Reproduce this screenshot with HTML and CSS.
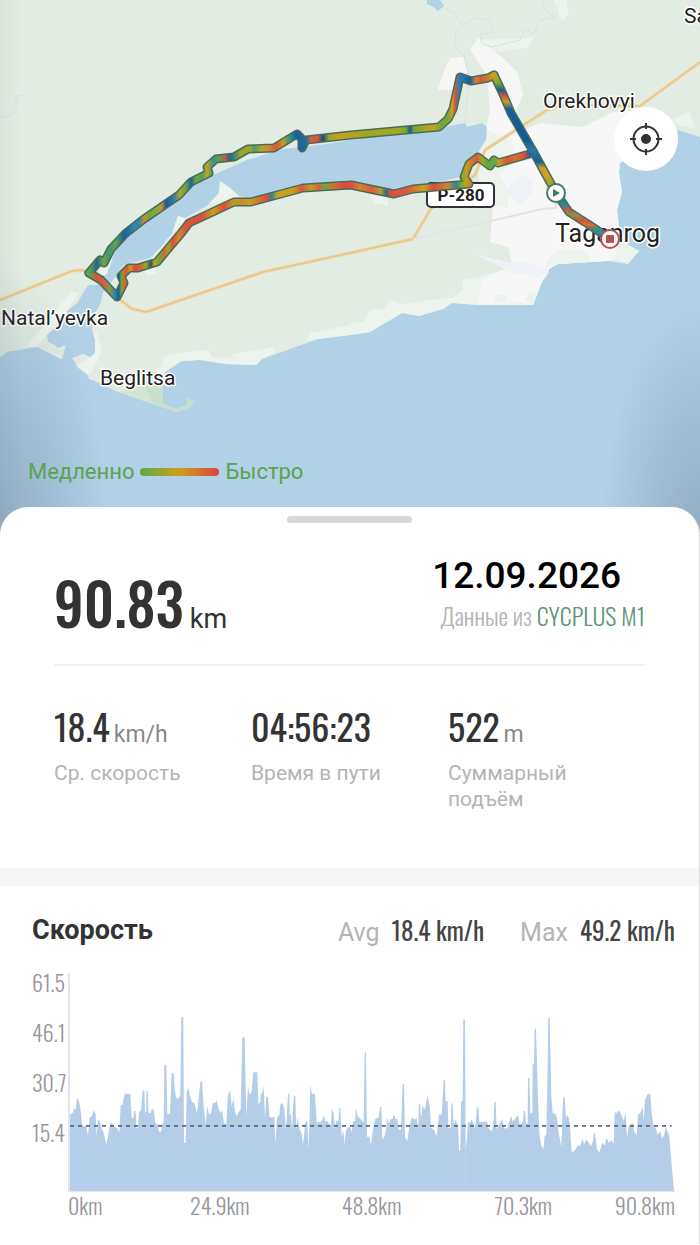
FILE: index.html
```
<!DOCTYPE html>
<html lang="ru">
<head>
  <meta charset="UTF-8">
  <meta name="viewport" content="width=device-width, initial-scale=1.0">
  <title>Поездка 12.09.2026</title>
  <link rel="stylesheet" href="styles.css">
</head>
<body>
  <section class="map">
    <svg class="map-canvas" viewBox="0 0 700 540" role="img" aria-label="Карта маршрута">
      <defs>
        <!-- route colours: offset = coordinate / 1000 -->
        <linearGradient id="speed-north" gradientUnits="userSpaceOnUse" x1="0" y1="0" x2="1000" y2="0">
          <stop offset=".090" stop-color="#5ba648"/><stop offset=".097" stop-color="#1f6595"/>
          <stop offset=".103" stop-color="#6fa63c"/><stop offset=".109" stop-color="#3f9375"/>
          <stop offset=".116" stop-color="#5fa545"/><stop offset=".124" stop-color="#17619a"/>
          <stop offset=".134" stop-color="#2f84b0"/><stop offset=".140" stop-color="#3a8a9a"/>
          <stop offset=".144" stop-color="#d08a2c"/><stop offset=".149" stop-color="#6fa63c"/>
          <stop offset=".158" stop-color="#92a634"/><stop offset=".162" stop-color="#cf8630"/>
          <stop offset=".166" stop-color="#125c98"/><stop offset=".174" stop-color="#2d7fa8"/>
          <stop offset=".180" stop-color="#b3a322"/><stop offset=".186" stop-color="#5fa64a"/>
          <stop offset=".191" stop-color="#1c6396"/><stop offset=".196" stop-color="#6fa63c"/>
          <stop offset=".202" stop-color="#4f9f68"/><stop offset=".207" stop-color="#c3a323"/>
          <stop offset=".213" stop-color="#3f9580"/><stop offset=".220" stop-color="#5f9f50"/>
          <stop offset=".225" stop-color="#d4553f"/><stop offset=".230" stop-color="#1a669c"/>
          <stop offset=".240" stop-color="#8da630"/><stop offset=".250" stop-color="#a3a52c"/>
          <stop offset=".254" stop-color="#4f9a70"/><stop offset=".262" stop-color="#c0a224"/>
          <stop offset=".269" stop-color="#d0872c"/><stop offset=".277" stop-color="#d8563c"/>
          <stop offset=".283" stop-color="#c7a122"/><stop offset=".289" stop-color="#3f9580"/>
          <stop offset=".296" stop-color="#175f9b"/><stop offset=".306" stop-color="#1d6da6"/>
          <stop offset=".311" stop-color="#d6603b"/><stop offset=".318" stop-color="#d8553d"/>
          <stop offset=".323" stop-color="#134f80"/><stop offset=".329" stop-color="#96a630"/>
          <stop offset=".338" stop-color="#c6a11e"/><stop offset=".360" stop-color="#a5a722"/>
          <stop offset=".400" stop-color="#9ca822"/><stop offset=".406" stop-color="#6fa63c"/>
          <stop offset=".410" stop-color="#15598f"/><stop offset=".414" stop-color="#6fa63c"/>
          <stop offset=".424" stop-color="#a5a722"/><stop offset=".434" stop-color="#c0a31f"/>
          <stop offset=".441" stop-color="#6fa63c"/><stop offset=".449" stop-color="#7fa634"/>
          <stop offset=".452" stop-color="#d0a022"/><stop offset=".455" stop-color="#d8563c"/>
          <stop offset=".459" stop-color="#2f80b0"/><stop offset=".470" stop-color="#12619f"/>
          <stop offset=".476" stop-color="#d07d3a"/><stop offset=".481" stop-color="#d8553d"/>
          <stop offset=".487" stop-color="#cf7a2c"/><stop offset=".494" stop-color="#c6a11e"/>
        </linearGradient>
        <linearGradient id="speed-south" gradientUnits="userSpaceOnUse" x1="0" y1="0" x2="1000" y2="0">
          <stop offset=".090" stop-color="#5ba648"/><stop offset=".096" stop-color="#d05a3c"/>
          <stop offset=".104" stop-color="#d6603b"/><stop offset=".110" stop-color="#7f9a50"/>
          <stop offset=".115" stop-color="#2f80b0"/><stop offset=".119" stop-color="#125c98"/>
          <stop offset=".121" stop-color="#5fa545"/><stop offset=".124" stop-color="#d0702c"/>
          <stop offset=".127" stop-color="#d8553d"/><stop offset=".130" stop-color="#c6a11e"/>
          <stop offset=".135" stop-color="#dc4a3c"/><stop offset=".140" stop-color="#d6603b"/>
          <stop offset=".146" stop-color="#9ca822"/><stop offset=".151" stop-color="#17557f"/>
          <stop offset=".154" stop-color="#c6a11e"/><stop offset=".160" stop-color="#6fa63c"/>
          <stop offset=".165" stop-color="#d8653d"/><stop offset=".168" stop-color="#a5a722"/>
          <stop offset=".173" stop-color="#dc4f3c"/><stop offset=".179" stop-color="#cf8a2c"/>
          <stop offset=".186" stop-color="#dc4f3c"/><stop offset=".203" stop-color="#d8553d"/>
          <stop offset=".213" stop-color="#c6a11e"/><stop offset=".224" stop-color="#dc4f3c"/>
          <stop offset=".234" stop-color="#b3a322"/><stop offset=".242" stop-color="#d0852c"/>
          <stop offset=".249" stop-color="#c6a11e"/><stop offset=".267" stop-color="#dc4f3c"/>
          <stop offset=".272" stop-color="#2f80a0"/><stop offset=".277" stop-color="#c0a31f"/>
          <stop offset=".292" stop-color="#c6a11e"/><stop offset=".302" stop-color="#dc553c"/>
          <stop offset=".311" stop-color="#b8a322"/><stop offset=".319" stop-color="#d6603b"/>
          <stop offset=".324" stop-color="#6fa63c"/><stop offset=".333" stop-color="#d0752c"/>
          <stop offset=".343" stop-color="#dc4a3c"/><stop offset=".352" stop-color="#d8553d"/>
          <stop offset=".360" stop-color="#d0852c"/><stop offset=".372" stop-color="#dc5a3c"/>
          <stop offset=".381" stop-color="#b0a030"/><stop offset=".386" stop-color="#1f6f9b"/>
          <stop offset=".390" stop-color="#dc4f3c"/><stop offset=".408" stop-color="#d8603d"/>
          <stop offset=".424" stop-color="#c6a11e"/><stop offset=".433" stop-color="#dc4f3c"/>
          <stop offset=".448" stop-color="#d0852c"/><stop offset=".456" stop-color="#2f859a"/>
          <stop offset=".462" stop-color="#7fa634"/><stop offset=".466" stop-color="#c0a31f"/>
          <stop offset=".472" stop-color="#d0752c"/><stop offset=".477" stop-color="#dc553c"/>
          <stop offset=".482" stop-color="#9ca822"/><stop offset=".488" stop-color="#5fa64a"/>
          <stop offset=".494" stop-color="#5fa64a"/><stop offset=".499" stop-color="#c0a31f"/>
          <stop offset=".507" stop-color="#dc553c"/><stop offset=".516" stop-color="#d0702c"/>
          <stop offset=".524" stop-color="#dc4f3c"/><stop offset=".530" stop-color="#1f6595"/>
        </linearGradient>
        <linearGradient id="speed-city" gradientUnits="userSpaceOnUse" x1="0" y1="0" x2="0" y2="1000">
          <stop offset=".076" stop-color="#c6a11e"/><stop offset=".083" stop-color="#7fa634"/>
          <stop offset=".090" stop-color="#16629c"/><stop offset=".096" stop-color="#d8553d"/>
          <stop offset=".102" stop-color="#c6a11e"/><stop offset=".109" stop-color="#155f9b"/>
          <stop offset=".140" stop-color="#0f5c98"/><stop offset=".150" stop-color="#2a7aa8"/>
          <stop offset=".162" stop-color="#155f9b"/><stop offset=".168" stop-color="#c6a11e"/>
          <stop offset=".177" stop-color="#d0a21f"/><stop offset=".187" stop-color="#7fa634"/>
          <stop offset=".198" stop-color="#1f6f9b"/><stop offset=".205" stop-color="#2f8a9a"/>
          <stop offset=".211" stop-color="#d8553d"/><stop offset=".215" stop-color="#7f9a50"/>
          <stop offset=".220" stop-color="#dc4f3c"/><stop offset=".225" stop-color="#d0702c"/>
          <stop offset=".230" stop-color="#2f8a9a"/>
        </linearGradient>
      </defs>

      <rect class="water" width="700" height="540"/>
      <path class="land" d="M0 0H700V137L678 130L640 150L620 163L619 173L622 192L617 210L619 227L628 245L639 251L635 255L628 264L608 261L558 264L549 269V273L542 282L533 305L520 302H497L494 301L488 304L478 305L452 303L443 309L419 316L402 313L370 332L350 335L318 339L262 359L256 365L225 364L224 362L200 360L182 361L172 365L165 372L163 380L163 403L170 407L177 409L187 405L188 398L194 402L190 407L177 412L118 392L97 382L78 367L72 358L61 359L37 347L7 352L0 357Z"/>

      <path class="shore" d="M350 323L363 322L372 309H383L390 300L402 304L453 297L463 290L462 280L497 272L520 262L533 305L478 305L452 303L443 309L419 316L402 313L370 332L350 335L318 339L306 341L310 333L350 325Z"/>
      <path class="shore" d="M163 357L180 353L208 350L212 357L233 358L232 354L260 350L272 347L276 352L262 359L256 365L225 364L200 360L182 361L165 372L150 372L163 366Z"/>
      <path class="shore" d="M25 347L52 318L60 305L72 291L79 293L66 312L47 335L37 347ZM92 332L97 333L102 350L97 362L88 378L118 392L97 382L76 366L94 355ZM50 352L61 356V359Z"/>
      <path class="shore" d="M150 259L157 273L148 275L140 268ZM478 40L533 38L530 47L500 52ZM553 0H566L569 13L562 23L557 8ZM672 120L690 112L695 128L680 126ZM369 196H388V206L375 203Z"/>
      <path class="spit-light" d="M118 392L135 384H150L152 403Z"/>
      <path class="spit" d="M145 385L163 385V403L177 409L187 405L188 398L194 402L190 407L177 412L152 403Z"/>

      <path class="town" d="M470 50L478 38L490 47L505 60L517 72L523 95L515 112L517 133L540 123L583 127L613 112L640 110L678 130L640 150L620 163L619 173L622 192L617 210L619 227L628 245L630 255L608 261L558 264L549 269L542 282L533 305L520 302L478 305L482 280L512 265L508 247L490 242L493 203L497 180L512 150L500 140L486 130L490 110L487 75Z"/>
      <path class="town" d="M450 58L463 57L467 70L465 80L458 90H438L443 73Z"/>
      <path class="shore" d="M545 268L548 259L558 249L587 251L590 262L558 264ZM614 258L620 240L639 251L628 264ZM486 130L512 140L514 160L500 175L508 190V208L493 205L480 200L478 165ZM493 300L495 295H507L506 302H497ZM525 300L530 293L537 292L533 305Z"/>
      <path class="park" d="M505 190L520 175L533 180L531 196L520 205ZM475 254L510 263H532L549 271L540 277L513 273Z"/>

      <path class="water" d="M97 285L104 275L110 267L115 250L125 238L167 207L187 187L213 175L247 160L283 149L327 144L350 140L440 128L465 123L467 127L482 123L487 127L486 140L473 160L460 177L427 185L393 192L350 182L300 184L250 198L239 196L230 188L220 181L219 193L208 205L185 218L178 216L172 233L160 248L150 258L123 265L113 280L103 292L101 302L92 320V330L95 340V353L90 357L83 354L72 358L61 366L64 352L66 345L58 348L55 345L48 342L47 335L67 318V311L77 303L88 285Z"/>
      <path class="shore" d="M219 193L220 181L230 188L239 196L208 205ZM172 233L178 216L185 218L182 224ZM101 269L107 268L108 272L106 275L98 275Z"/>
      <path class="water" d="M427 0H440L444 6L438 11L432 6L427 4Z"/>
      <path class="stream" d="M444 8L455 14L463 26L456 33L455 45L465 58L469 75L465 123M463 26L475 18L490 20L493 32L480 35L482 44L492 47L520 40L525 28L533 35L540 20L555 17L543 8V0M24 95L15 97L18 106L14 114L5 117L0 116"/>

      <path class="road-halo" d="M0 300L72 271L82 270L90 274M118 298L132 309L146 312L263 272L350 253L413 239L430 210L475 175L485 150L547 110L563 105L640 106L700 62"/>
      <path class="road" d="M0 300L72 271L82 270L90 274M118 298L132 309L146 312L263 272L350 253L413 239L430 210L475 175L485 150L547 110L563 105L640 106L700 62"/>
      <path class="road-minor" d="M413 239L542 209L556 208V193"/>

      <rect class="shield" x="427" y="183" width="67" height="24" rx="4"/>
      <text class="shield-text" x="461" y="201">P-280</text>
      <g class="places">
        <text x="543" y="108">Orekhovyi</text>
        <text x="684" y="23">Sa</text>
        <text x="1" y="325">Natal’yevka</text>
        <text x="100" y="385">Beglitsa</text>
        <text class="city" x="555" y="242">Taganrog</text>
      </g>

      <g class="route-edge">
        <path d="M533 153L498 163L494 160L490 166L478 157L469 164L464 177L469 184L413 189L394 194L351 185L303 188L251 202L234 202L189 223L183 231L157 262L138 268H129L121 276L124 283L117 297L101 280L89 273"/>
        <path d="M494 75L488 78L471 81L460 77L453 109L448 119L439 127L351 135L306 140L302 148V139L297 134L274 148L248 149L234 157L216 159L207 167L209 173L191 182L179 195L144 219L126 233L111 249L104 263L100 260L89 273"/>
        <path d="M494 75L503 94L511 113L533 151L556 193L569 212L591 226L610 239"/>
      </g>
      <g class="route">
        <path stroke="url(#speed-south)" d="M533 153L498 163L494 160L490 166L478 157L469 164L464 177L469 184L413 189L394 194L351 185L303 188L251 202L234 202L189 223L183 231L157 262L138 268H129L121 276L124 283L117 297L101 280L89 273"/>
        <path stroke="url(#speed-north)" d="M494 75L488 78L471 81L460 77L453 109L448 119L439 127L351 135L306 140L302 148V139L297 134L274 148L248 149L234 157L216 159L207 167L209 173L191 182L179 195L144 219L126 233L111 249L104 263L100 260L89 273"/>
        <path stroke="url(#speed-city)" d="M494 75L503 94L511 113L533 151L556 193L569 212L591 226L610 239"/>
      </g>

      <circle class="pin start" cx="556" cy="193" r="9"/>
      <path class="start-icon" d="M553 189V197L560 193Z"/>
      <circle class="pin finish" cx="610" cy="239" r="9"/>
      <rect class="finish-icon" x="606" y="235" width="8" height="8" rx="1"/>
    </svg>

    <button class="locate" type="button" aria-label="Моё местоположение">
      <svg viewBox="0 0 34 34">
        <circle cx="17" cy="17" r="12.5"/>
        <path d="M17 1V7M17 27V33M1 17H7M27 17H33"/>
        <circle class="dot" cx="17" cy="17" r="4"/>
      </svg>
    </button>

    <div class="legend">
      <span>Медленно</span>
      <span class="legend-bar"></span>
      <span>Быстро</span>
    </div>
  </section>

  <main class="sheet">
    <div class="handle"></div>

    <section class="summary">
      <div class="headline">
        <p class="distance">90.83<small>km</small></p>
        <div class="source">
          <p class="date">12.09.2026</p>
          <p class="device">Данные из <b>CYCPLUS M1</b></p>
        </div>
      </div>
      <dl class="stats">
        <div>
          <dd>18.4<small>km/h</small></dd>
          <dt>Ср. скорость</dt>
        </div>
        <div>
          <dd>04:56:23</dd>
          <dt>Время в пути</dt>
        </div>
        <div>
          <dd>522<small>m</small></dd>
          <dt>Суммарный подъём</dt>
        </div>
      </dl>
    </section>

    <section class="speed">
      <header class="speed-head">
        <h2>Скорость</h2>
        <p>Avg <b>18.4 km/h</b></p>
        <p>Max <b>49.2 km/h</b></p>
      </header>
      <div class="chart">
        <div class="y-axis">
          <span>61.5</span>
          <span>46.1</span>
          <span>30.7</span>
          <span>15.4</span>
        </div>
        <svg class="plot" viewBox="0 0 1815 656" preserveAspectRatio="none" role="img" aria-label="График скорости">
          <g class="area">
            <path transform="translate(-207 -219)" d="M207 875V645L217 638L219 626L224 630L228 596L232 600L236 614L240 640L243 675L250 680H256L260 707L264 680L265 655L272 650L278 632L284 645L287 712L291 658L297 668L301 685L308 700L316 735L322 705L326 680L331 668L340 680L350 688L355 700L359 616H365L367 600L372 582H388L392 655H397L400 634H404L406 685H411L414 638L420 632L425 573H430L432 637H436V573H440L443 640H449L453 626L459 634L463 670L470 675L474 697H480L484 670H488L490 495H496L499 643H507L512 520H518L521 570L526 597H533L538 585L541 352H547L549 730H554L557 580L562 563L567 590L573 607L580 610L588 640L593 600L598 545H603L608 620L614 675L619 620L624 645L630 640L636 607L642 612L646 602L652 622L658 640L663 632L669 670L676 675L681 585L687 570L692 620L697 597L702 637L708 650L712 637L721 630V875Z"/>
            <path transform="translate(483 -219)" d="M29 875V630L34 412H41L46 650L51 558L56 585L62 575L67 518H79L82 612L87 610L90 583L94 580L96 557L99 580L102 655L106 592H111L115 650L122 655L130 650L133 732L138 655L145 645L148 615L155 610L160 630L165 690L168 640L171 582H175L176 645H180L183 690L186 620L189 588H193L196 690L200 653L206 690L212 702L216 735L220 700L222 670L229 662L233 750L237 600L238 556L243 583H252L257 668H268L275 660L278 645L283 665H290L295 675H300L302 628L308 640L312 690L315 663L322 665L325 625H328L332 712L337 692L340 735L346 690L357 680L361 700L366 665H372L375 624L380 650L390 660L398 668L401 458H405L408 712H415L420 735L426 690L432 660L443 652L447 622H451L454 720L460 710L466 685L468 655L474 672L479 658H485L489 643L494 658H499L503 690H510L515 553H519L522 712L529 725L535 680L543 652L550 660L557 655L561 690L564 612H567L570 655L575 620L582 630L589 588L596 615L600 685L608 690L617 710L624 645H632L638 540H642L644 605H650L652 685H660L661 612H665L668 675L675 660L682 690L684 752H688L690 605H695L697 360H702L704 755V875Z"/>
            <path transform="translate(1173 -219)" d="M13 875V755L18 715L21 668H28L31 660L38 670L41 690L45 660L48 623H52L55 668L78 666L82 685L93 697L98 660L100 607H104L107 690L115 675L124 658L129 685L138 688L145 665L150 648L155 665L163 658L171 645L176 675L186 668L188 634H192L195 672H200L201 535H205L208 640H214L215 493H219L221 387H225L231 600L235 700L240 735L247 750L251 710L256 705L259 560L262 353H266L271 590L275 640L283 643L288 655L293 700L301 742L306 600L308 592H311L315 655L320 645L326 670L332 758L340 755L350 738H358L364 718L370 735L375 720L382 728L390 740L396 725L399 700H402L408 750L415 760L424 730L431 738L437 715L443 730L452 722L458 732L461 637L467 642L472 632L480 642L487 665L494 642L498 715L503 680L510 675L514 668L520 695L527 708L531 645L538 640L545 622L548 665L552 600L560 583H568L572 640L578 680L584 685L590 705L598 695L603 718L610 705L614 680L625 710L630 775L639 875Z"/>
          </g>
          <path class="average" d="M0 460H1805"/>
        </svg>
        <div class="x-axis">
          <span>0km</span>
          <span>24.9km</span>
          <span>48.8km</span>
          <span>70.3km</span>
          <span>90.8km</span>
        </div>
      </div>
    </section>
  </main>
</body>
</html>
```
FILE: styles.css
```
* {
  box-sizing: border-box;
}
body {
  margin: 0;
  font-family: Roboto, sans-serif;
  background: #fff;
  color: #333;
}
p, h2, dl, dd {
  margin: 0;
}

/* map */
.map {
  position: relative;
}
.map::after {
  content: "";
  position: absolute;
  inset: 0;
  pointer-events: none;
  background:
    radial-gradient(ellipse 110px 280px at 0 100%, rgba(95, 115, 140, 0.4), transparent),
    radial-gradient(ellipse 100px 240px at 100% 100%, rgba(95, 115, 140, 0.4), transparent),
    linear-gradient(to right, rgba(100, 120, 120, 0.08), transparent 3%);
}
.map-canvas {
  display: block;
  width: 100%;
}
.water {
  fill: #b1d1e6;
}
.land {
  fill: #e2ece2;
}
.shore {
  fill: #ecf4ed;
}
.spit {
  fill: #c8dfc9;
}
.spit-light {
  fill: #d5e4d5;
}
.town {
  fill: #f7f7f7;
}
.park {
  fill: #eff3f7;
}
.stream, .road, .road-halo, .road-minor {
  fill: none;
  stroke-linejoin: round;
}
.stream {
  stroke: #d3e2e4;
  stroke-width: 1;
}
.road {
  stroke: #e6c88c;
  stroke-width: 2;
}
.road-halo {
  stroke: #eedfbc;
  stroke-width: 4;
}
.road-minor {
  stroke: #e3e3e6;
  stroke-width: 2;
}
.shield {
  fill: #fff;
  stroke: #2e3138;
  stroke-width: 2;
}
.shield-text {
  font-size: 17px;
  font-weight: 700;
  text-anchor: middle;
  fill: #222;
}
.places {
  font-size: 21px;
  fill: #222;
  stroke: #fff;
  stroke-width: 3;
  stroke-linejoin: round;
  paint-order: stroke;
}
.city {
  font-size: 25px;
}
.route, .route-edge {
  fill: none;
  stroke-linecap: round;
  stroke-linejoin: round;
}
.route-edge {
  stroke: #4a6a58;
  stroke-width: 9;
}
.route {
  stroke-width: 6;
}
.pin {
  fill: #fff;
  stroke-width: 2;
}
.start {
  stroke: #3f7d5f;
}
.start-icon {
  fill: #3f7d5f;
}
.finish {
  stroke: #b85050;
}
.finish-icon {
  fill: #b85050;
}
.locate {
  position: absolute;
  z-index: 1;
  top: 107px;
  right: 22px;
  width: 64px;
  height: 64px;
  padding: 15px;
  border: 0;
  border-radius: 50%;
  background: #fff;
}
.locate svg {
  display: block;
  fill: none;
  stroke: #333;
  stroke-width: 2;
}
.locate .dot {
  fill: #333;
}
.legend {
  position: absolute;
  z-index: 1;
  left: 28px;
  bottom: 54px;
  display: flex;
  align-items: center;
  gap: 6px;
  font-size: 22px;
  line-height: 28px;
  color: #5aa352;
}
.legend-bar {
  width: 79px;
  height: 8px;
  border-radius: 4px;
  background: linear-gradient(to right, #5fa648, #cfa01c, #d8433f);
}

/* sheet */
.sheet {
  position: relative;
  z-index: 2;
  margin-top: -33px;
  padding-top: 9px;
  border-right: 1px solid #ddd;
  border-radius: 28px 28px 0 0;
  background: #fff;
}
.handle {
  width: 125px;
  height: 7px;
  margin: 0 auto;
  border-radius: 4px;
  background: #d8d8d8;
}
.summary {
  padding: 29px 54px 56px;
  border-bottom: 18px solid #f6f6f4;
}
.distance, .device, dd, .speed-head b, .chart {
  font-family: Oswald, "Liberation Sans Narrow", sans-serif;
}
small {
  font-family: Roboto, sans-serif;
  font-weight: 400;
}
.headline {
  display: flex;
  justify-content: space-between;
  align-items: flex-end;
  padding-bottom: 32px;
  border-bottom: 2px solid #f2f2f2;
}
.distance {
  display: flex;
  align-items: baseline;
  gap: 6px;
  height: 60px;
  font-size: 57px;
  font-weight: 500;
  line-height: 60px;
}
.distance small {
  font-size: 27px;
}
.source {
  text-align: right;
}
.date {
  padding-right: 24px;
  font-size: 37px;
  font-weight: 500;
  line-height: 48px;
  color: #000;
}
.device {
  font-size: 24px;
  font-weight: 350;
  line-height: 30px;
  padding-bottom: 2px;
  color: #b4b4b4;
}
.device b {
  font-weight: 350;
  color: #5f947a;
}
.stats {
  display: grid;
  grid-template-columns: repeat(3, 1fr);
  padding-top: 35px;
}
.stats div {
  display: flex;
  flex-direction: column;
}
dd {
  display: flex;
  align-items: baseline;
  gap: 4px;
  height: 50px;
  font-size: 36px;
  line-height: 50px;
}
dd small {
  font-size: 23px;
  color: #888;
}
dt {
  margin-top: 9px;
  padding-right: 60px;
  font-size: 21px;
  line-height: 26px;
  color: #b4b4b4;
}

/* speed chart */
.speed {
  padding: 24px 24px 30px 32px;
}
.speed-head {
  display: flex;
  align-items: center;
  gap: 36px;
  line-height: 40px;
}
.speed-head h2 {
  margin-right: auto;
  font-size: 27px;
}
.speed-head p {
  display: flex;
  align-items: baseline;
  gap: 12px;
  height: 40px;
  font-size: 25px;
  color: #b4b4b4;
}
.speed-head b {
  font-weight: 400;
  color: #444;
}
.chart {
  display: grid;
  grid-template-columns: 36px 1fr;
  margin-top: 23px;
  font-size: 22px;
  font-weight: 350;
  line-height: 18px;
  color: #96969c;
}
.y-axis {
  display: flex;
  flex-direction: column;
  gap: 32px;
}
.plot {
  width: 100%;
  height: 219px;
  border-left: 2px solid #e4e4e6;
  border-bottom: 1px solid #e4e4e6;
}
.area {
  fill: #b4cde8;
}
.average {
  stroke: #5f6b78;
  stroke-width: 5;
  stroke-dasharray: 12 12;
}
.x-axis {
  grid-column: 2;
  display: grid;
  grid-template-columns: 1fr 2fr 2fr 2fr 1fr;
  padding-top: 4px;
  text-align: center;
}
.x-axis span:first-child {
  text-align: left;
}
.x-axis span:last-child {
  text-align: right;
}
```
